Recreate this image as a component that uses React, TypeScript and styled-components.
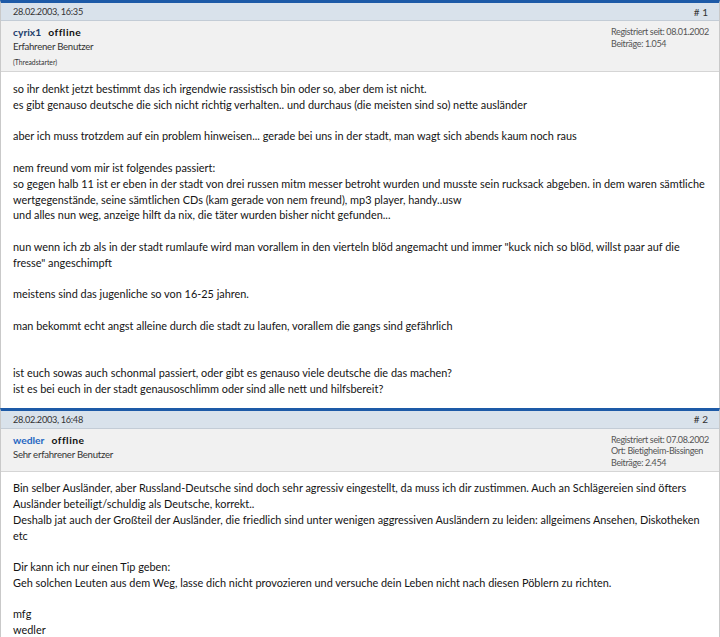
import React from "react";
import styled, { createGlobalStyle } from "styled-components";

const GlobalStyle = createGlobalStyle`
  html, body { margin: 0; padding: 0; background: #ffffff; }
  body { font-family: Lato, "Open Sans", Arial, sans-serif; color: #222; }
`;

const Thread = styled.div`
  width: 720px;
  display: flex;
  flex-direction: column;
`;

const Post = styled.div`
  border-top: 3px solid #1d5aa7;
  border-left: 1px solid #c9c9c9;
  border-right: 1px solid #c9c9c9;
  display: flex;
  flex-direction: column;
`;

const PostHeader = styled.div`
  height: 17px;
  background: #d9e2eb;
  border-bottom: 1px solid #c3ccd6;
  display: flex;
  align-items: center;
  justify-content: space-between;
  padding: 0 11px 0 12px;
  font-size: 9.2px;
  letter-spacing: -0.3px;
  color: #333;
`;

const PostNumber = styled.span`
  font-size: 10px;
  letter-spacing: 0;
`;

const UserBar = styled.div`
  background: #f1f1f1;
  border-bottom: 1px solid #d5d5d5;
  display: flex;
  justify-content: space-between;
  align-items: flex-start;
  padding: 4px 11px 3px 12px;
`;

const UserLeft = styled.div`
  display: flex;
  flex-direction: column;
`;

const NameRow = styled.div`
  display: flex;
  gap: 7px;
  font-weight: bold;
  font-size: 10.3px;
  line-height: 14px;
`;

const UserName = styled.span<{ $tone: "dark" | "light" }>`
  color: ${(p) => (p.$tone === "dark" ? "#1e3d6c" : "#2566c2")};
`;

const Status = styled.span`
  color: #111;
  letter-spacing: 0.5px;
`;

const Rank = styled.div`
  margin-top: 1px;
  font-size: 9.6px;
  letter-spacing: -0.25px;
  line-height: 14px;
  color: #333;
`;

const Starter = styled.div`
  margin-top: 3px;
  font-size: 6.8px;
  line-height: 11px;
  color: #333;
`;

const UserRight = styled.div`
  display: flex;
  flex-direction: column;
  padding-top: 1px;
  width: 97px;
  font-size: 9px;
  letter-spacing: -0.35px;
  line-height: 11.5px;
  color: #555;
  white-space: nowrap;
`;

const Body = styled.div<{ $top: number; $bottom: number; $lh: number }>`
  padding: ${(p) => p.$top}px 11px ${(p) => p.$bottom}px 12px;
  font-size: 10.9px;
  line-height: ${(p) => p.$lh}px;
  color: #141414;
`;

const Line = styled.div`
  white-space: nowrap;
  min-height: 1em;
`;

type PostData = {
  date: string;
  num: string;
  user: string;
  tone: "dark" | "light";
  rank: string;
  starter?: boolean;
  info: string[];
  lines: string[];
  top: number;
  bottom: number;
  lh: number;
};

const posts: PostData[] = [
  {
    date: "28.02.2003, 16:35",
    num: "# 1",
    user: "cyrix1",
    tone: "dark",
    rank: "Erfahrener Benutzer",
    starter: true,
    info: ["Registriert seit: 08.01.2002", "Beiträge: 1.054"],
    top: 9,
    bottom: 11,
    lh: 15.8,
    lines: [
      "so ihr denkt jetzt bestimmt das ich irgendwie rassistisch bin oder so, aber dem ist nicht.",
      "es gibt genauso deutsche die sich nicht richtig verhalten.. und durchaus (die meisten sind so) nette ausländer",
      "",
      "aber ich muss trotzdem auf ein problem hinweisen... gerade bei uns in der stadt, man wagt sich abends kaum noch raus",
      "",
      "nem freund vom mir ist folgendes passiert:",
      "so gegen halb 11 ist er eben in der stadt von drei russen mitm messer betroht wurden und musste sein rucksack abgeben. in dem waren sämtliche",
      "wertgegenstände, seine sämtlichen CDs (kam gerade von nem freund), mp3 player, handy..usw",
      "und alles nun weg, anzeige hilft da nix, die täter wurden bisher nicht gefunden...",
      "",
      "nun wenn ich zb als in der stadt rumlaufe wird man vorallem in den vierteln blöd angemacht und immer \"kuck nich so blöd, willst paar auf die",
      "fresse\" angeschimpft",
      "",
      "meistens sind das jugenliche so von 16-25 jahren.",
      "",
      "man bekommt echt angst alleine durch die stadt zu laufen, vorallem die gangs sind gefährlich",
      "",
      "",
      "ist euch sowas auch schonmal passiert, oder gibt es genauso viele deutsche die das machen?",
      "ist es bei euch in der stadt genausoschlimm oder sind alle nett und hilfsbereit?",
    ],
  },
  {
    date: "28.02.2003, 16:48",
    num: "# 2",
    user: "wedler",
    tone: "light",
    rank: "Sehr erfahrener Benutzer",
    info: ["Registriert seit: 07.08.2002", "Ort: Bietigheim-Bissingen", "Beiträge: 2.454"],
    top: 8,
    bottom: 10,
    lh: 15.7,
    lines: [
      "Bin selber Ausländer, aber Russland-Deutsche sind doch sehr agressiv eingestellt, da muss ich dir zustimmen. Auch an Schlägereien sind öfters",
      "Ausländer beteiligt/schuldig als Deutsche, korrekt..",
      "Deshalb jat auch der Großteil der Ausländer, die friedlich sind unter wenigen aggressiven Ausländern zu leiden: allgeimens Ansehen, Diskotheken",
      "etc",
      "",
      "Dir kann ich nur einen Tip geben:",
      "Geh solchen Leuten aus dem Weg, lasse dich nicht provozieren und versuche dein Leben nicht nach diesen Pöblern zu richten.",
      "",
      "mfg",
      "wedler",
    ],
  },
];

export default function App() {
  return (
    <>
      <GlobalStyle />
      <Thread>
        {posts.map((p) => (
          <Post key={p.num}>
            <PostHeader>
              <span>{p.date}</span>
              <PostNumber>{p.num}</PostNumber>
            </PostHeader>
            <UserBar>
              <UserLeft>
                <NameRow>
                  <UserName $tone={p.tone}>{p.user}</UserName>
                  <Status>offline</Status>
                </NameRow>
                <Rank>{p.rank}</Rank>
                {p.starter && <Starter>(Threadstarter)</Starter>}
              </UserLeft>
              <UserRight>
                {p.info.map((i) => (
                  <span key={i}>{i}</span>
                ))}
              </UserRight>
            </UserBar>
            <Body $top={p.top} $bottom={p.bottom} $lh={p.lh}>
              {p.lines.map((l, i) => (
                <Line key={i}>{l === "" ? "\u00a0" : l}</Line>
              ))}
            </Body>
          </Post>
        ))}
      </Thread>
    </>
  );
}
